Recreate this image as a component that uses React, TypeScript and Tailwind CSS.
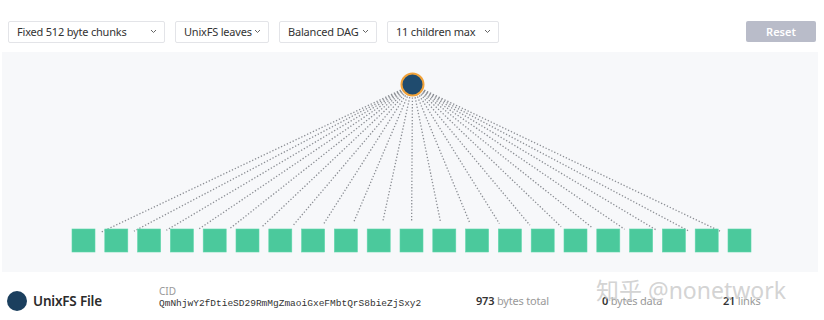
const SELECTS = [
  { label: "Fixed 512 byte chunks", w: "w-[157px]" },
  { label: "UnixFS leaves", w: "w-[94px]" },
  { label: "Balanced DAG", w: "w-[98px]" },
  { label: "11 children max", w: "w-[112px]" },
];

const ROOT = { x: 410.5, y: 32.5 };
const LEAVES = Array.from({ length: 21 }, (_, i) => ({ x: 81.5 + i * 32.8, y: 188.5 }));

function trim(ax: number, ay: number, bx: number, by: number, s: number, e: number) {
  const dx = bx - ax;
  const dy = by - ay;
  const len = Math.sqrt(dx * dx + dy * dy);
  const ux = dx / len;
  const uy = dy / len;
  return { x1: ax + ux * s, y1: ay + uy * s, x2: bx - ux * e, y2: by - uy * e };
}

function Chevron() {
  return (
    <svg width="7" height="5" viewBox="0 0 7 5" className="shrink-0">
      <path d="M1 1 L3.5 3.5 L6 1" fill="none" stroke="#666" strokeWidth="1" />
    </svg>
  );
}

export default function App() {
  return (
    <div className="relative w-[824px] h-[320px] bg-white overflow-hidden font-['Noto_Sans',sans-serif] text-[#333]">
      {/* toolbar */}
      <div className="flex items-center pt-[21px] pl-[8px] pr-[8px] h-[42px]">
        <div className="flex gap-[10px]">
          {SELECTS.map((s) => (
            <div
              key={s.label}
              className={`${s.w} h-[22px] flex items-center justify-between pl-[8px] pr-[7px] border border-[#e3e4e8] rounded-[2px] bg-white text-[11px] tracking-[-0.2px] leading-none text-[#333] whitespace-nowrap`}
            >
              <span>{s.label}</span>
              <Chevron />
            </div>
          ))}
        </div>
        <button className="ml-auto w-[70px] h-[21px] rounded-[2px] bg-[#b9bcc9] text-white text-[11px] font-semibold leading-none">
          Reset
        </button>
      </div>

      {/* canvas */}
      <div className="mt-[10px] ml-[2px] w-[816px] h-[220px] bg-[#f7f8fa]">
        <svg width="816" height="220">
          {LEAVES.map((l, i) => {
            const t = trim(ROOT.x, ROOT.y, l.x, l.y, 13, 20);
            return (
              <line
                key={i}
                {...t}
                stroke="#8a8d93"
                strokeWidth="1.3"
                strokeDasharray="1.3 1.9"
              />
            );
          })}
          {LEAVES.map((l, i) => (
            <rect
              key={i}
              x={l.x - 11.5}
              y={l.y - 11.5}
              width="23"
              height="23"
              fill="#4bc99c"
              stroke="#5fd6ab"
              strokeWidth="0.6"
            />
          ))}
          <circle cx={ROOT.x} cy={ROOT.y} r="11" fill="#1f4b6e" stroke="#f0a23a" strokeWidth="2" />
        </svg>
      </div>

      {/* info row */}
      <div className="flex items-center h-[48px] pt-[10px] pl-[7px]">
        <div className="w-[20px] h-[20px] rounded-full bg-[#1b3f5e]" />
        <span className="ml-[6px] w-[126px] text-[13.5px] tracking-[-0.2px] font-semibold text-[#2b2b2b]">UnixFS File</span>
        <div className="flex flex-col w-[317px] pb-[8px]">
          <span className="text-[10px] leading-[12px] text-[#999]">CID</span>
          <span className="font-['Liberation_Mono',monospace] text-[9.5px] leading-[13px] text-[#333]">
            QmNhjwY2fDtieSD29RmMgZmaoiGxeFMbtQrS8bieZjSxy2
          </span>
        </div>
        <span className="w-[126px] text-[11px] tracking-[-0.2px] text-[#999]">
          <span className="font-semibold text-[#333]">973</span> bytes total
        </span>
        <span className="w-[121px] text-[11px] tracking-[-0.2px] text-[#999]">
          <span className="font-semibold text-[#333]">0</span> bytes data
        </span>
        <span className="text-[11px] tracking-[-0.2px] text-[#999]">
          <span className="font-semibold text-[#333]">21</span> links
        </span>
      </div>

      {/* watermark */}
      <div className="absolute left-[596px] top-[279px] pointer-events-none text-[23px] leading-none text-[#c8c8c8]/80 font-['Noto_Sans','Noto_Sans_CJK_SC',sans-serif]">
        知乎 @nonetwork
      </div>
    </div>
  );
}
